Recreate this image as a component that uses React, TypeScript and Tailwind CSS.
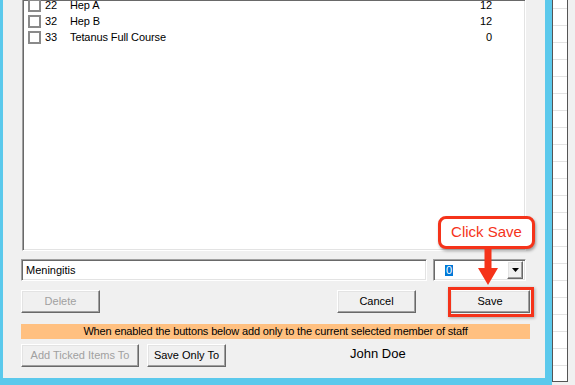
import type { ReactNode } from 'react';

const raised =
  'border border-t-white border-l-white border-b-[#696969] border-r-[#696969] bg-[#f0f0f0] shadow-[inset_-1px_-1px_0_#a0a0a0,inset_1px_1px_0_#e3e3e3]';
const sunken =
  'border border-t-[#a0a0a0] border-l-[#a0a0a0] border-b-white border-r-white shadow-[inset_1px_1px_0_#696969,inset_-1px_-1px_0_#e3e3e3]';

function Btn({ w, disabled, children }: { w: string; disabled?: boolean; children: ReactNode }) {
  return (
    <button
      type="button"
      className={`${raised} ${w} flex h-[23px] shrink-0 items-center justify-center text-[11px] ${
        disabled ? 'text-[#a0a0a0]' : 'text-black'
      }`}
    >
      {children}
    </button>
  );
}

const items = [
  { code: '22', name: 'Hep A', qty: '12' },
  { code: '32', name: 'Hep B', qty: '12' },
  { code: '33', name: 'Tetanus Full Course', qty: '0' },
];

export default function App() {
  return (
    <div className="flex h-[385px] w-[575px] overflow-hidden bg-[#f0f0f0] font-['Liberation_Sans',Arial,sans-serif] text-black">
      {/* dialog window with the blue frame */}
      <div className="h-[385px] w-[552px] shrink-0 bg-[#5bc9ec] pb-[7px] pl-[3px] pr-[7px]">
        <div className="relative flex h-[378px] w-[542px] flex-col bg-[#f0f0f0]">
          {/* vaccine list */}
          <div className={`ml-[19px] h-[251px] w-[504px] overflow-hidden border-t-0 bg-white pl-[5px] pr-[33px] ${sunken}`}>
            <div className="-mt-[3px]">
              {items.map((it) => (
                <div key={it.code} className="flex h-[16px] items-center text-[11px] tracking-[-0.1px]">
                  <span className="h-[13px] w-[13px] shrink-0 border-2 border-[#8a8a8a] bg-white" />
                  <span className="ml-[4px] w-[25px] shrink-0">{it.code}</span>
                  <span className="flex-1">{it.name}</span>
                  <span className="text-right">{it.qty}</span>
                </div>
              ))}
            </div>
          </div>

          {/* name + dose */}
          <div className="ml-[18px] mt-[8px] flex h-[22px] items-center">
            <div className={`flex h-[22px] w-[406px] items-center bg-white pl-[4px] text-[11px] ${sunken}`}>
              Meningitis
            </div>
            <div className={`ml-[6px] flex h-[22px] w-[93px] items-center bg-white pl-[11px] pr-[2px] ${sunken}`}>
              <span className="bg-[#0078d7] px-[1px] text-[11px] leading-[11px] text-white">0</span>
              <span className={`${raised} ml-auto flex h-[18px] w-[16px] items-center justify-center`}>
                <svg width="7" height="4" viewBox="0 0 7 4">
                  <path d="M0 0h7L3.5 4z" fill="#000" />
                </svg>
              </span>
            </div>
          </div>

          {/* action buttons */}
          <div className="ml-[18px] mt-[9px] flex items-center">
            <Btn w="w-[79px]" disabled>
              Delete
            </Btn>
            <div className="ml-[237px]">
              <Btn w="w-[79px]">Cancel</Btn>
            </div>
            <div className="ml-[34px]">
              <Btn w="w-[80px]">Save</Btn>
            </div>
          </div>

          <div className="ml-[18px] mt-[11px] flex h-[15px] w-[509px] items-center justify-center bg-[#ffc080] text-[11px] tracking-[-0.15px]">
            When enabled the buttons below add only to the current selected member of staff
          </div>

          <div className="ml-[18px] mt-[5px] flex items-center">
            <Btn w="w-[118px]" disabled>
              Add Ticked Items To
            </Btn>
            <div className="ml-[8px]">
              <Btn w="w-[79px]">Save Only To</Btn>
            </div>
            <span className="ml-[124px] -mt-[4px] text-[13px]">John Doe</span>
          </div>

          {/* annotation: callout, arrow and highlight */}
          <div className="absolute left-[435px] top-[216px] flex h-[33px] w-[97px] items-center justify-center rounded-[8px] border-[3px] border-[#f5331a] bg-white text-[15px] text-[#f5331a] shadow-[1px_2px_3px_rgba(0,0,0,0.35)]">
            Click Save
          </div>
          <svg className="absolute left-[474px] top-[249px]" width="22" height="37" viewBox="0 0 22 37">
            <path d="M7.5 0h7v19h6.5L11 36 1 19h6.5z" fill="#f5331a" />
          </svg>
          <div className="absolute left-[445px] top-[287px] h-[30px] w-[86px] border-[3px] border-[#f5331a] shadow-[1px_1px_3px_rgba(0,0,0,0.3)]" />
        </div>
      </div>

      {/* neighbouring grid */}
      <div className="h-[382px] w-[16px] shrink-0 border-x border-b border-[#555] bg-white bg-[repeating-linear-gradient(to_bottom,transparent_0px,transparent_8px,#e3e3e3_8px,#e3e3e3_9px,transparent_9px,transparent_17px)]" />
    </div>
  );
}
